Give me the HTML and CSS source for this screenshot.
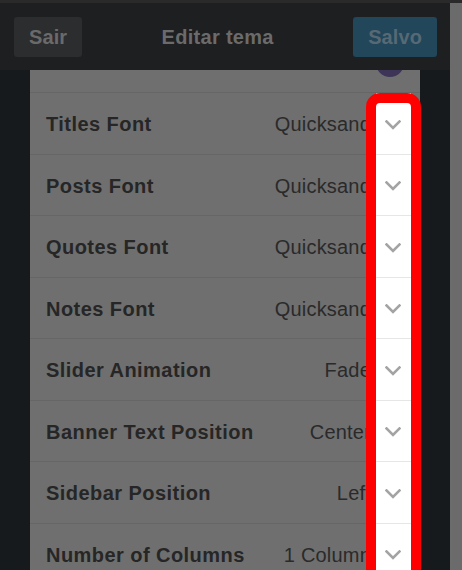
FILE: index.html
```html
<!DOCTYPE html>
<html>
<head>
<meta charset="utf-8">
<link rel="stylesheet" href="styles.css">
</head>
<body>
<div class="topline"></div>
<div class="frame">
  <div class="main">
    <header class="header">
      <button class="btn btn-exit">Sair</button>
      <div class="title">Editar tema</div>
      <button class="btn btn-save">Salvo</button>
    </header>
    <div class="content">
      <div class="panel">
        <div class="row-partial"><div class="swatch"></div></div>
        <div class="row"><div class="row-main"><span class="label">Titles Font</span><span class="value">Quicksand</span></div><div class="chev"><svg width="16" height="10" viewBox="0 0 16 10"><polyline points="1.5,1.5 8,8 14.5,1.5"/></svg></div></div>
        <div class="row"><div class="row-main"><span class="label">Posts Font</span><span class="value">Quicksand</span></div><div class="chev"><svg width="16" height="10" viewBox="0 0 16 10"><polyline points="1.5,1.5 8,8 14.5,1.5"/></svg></div></div>
        <div class="row"><div class="row-main"><span class="label">Quotes Font</span><span class="value">Quicksand</span></div><div class="chev"><svg width="16" height="10" viewBox="0 0 16 10"><polyline points="1.5,1.5 8,8 14.5,1.5"/></svg></div></div>
        <div class="row"><div class="row-main"><span class="label">Notes Font</span><span class="value">Quicksand</span></div><div class="chev"><svg width="16" height="10" viewBox="0 0 16 10"><polyline points="1.5,1.5 8,8 14.5,1.5"/></svg></div></div>
        <div class="row"><div class="row-main"><span class="label">Slider Animation</span><span class="value">Fade</span></div><div class="chev"><svg width="16" height="10" viewBox="0 0 16 10"><polyline points="1.5,1.5 8,8 14.5,1.5"/></svg></div></div>
        <div class="row"><div class="row-main"><span class="label">Banner Text Position</span><span class="value">Center</span></div><div class="chev"><svg width="16" height="10" viewBox="0 0 16 10"><polyline points="1.5,1.5 8,8 14.5,1.5"/></svg></div></div>
        <div class="row"><div class="row-main"><span class="label">Sidebar Position</span><span class="value">Left</span></div><div class="chev"><svg width="16" height="10" viewBox="0 0 16 10"><polyline points="1.5,1.5 8,8 14.5,1.5"/></svg></div></div>
        <div class="row"><div class="row-main"><span class="label">Number of Columns</span><span class="value">1 Column</span></div><div class="chev"><svg width="16" height="10" viewBox="0 0 16 10"><polyline points="1.5,1.5 8,8 14.5,1.5"/></svg></div></div>
      </div>
      <div class="highlight"></div>
    </div>
  </div>
  <div class="scroll"></div>
</div>
</body>
</html>
```
FILE: styles.css
```css
* { box-sizing: border-box; }
html, body { margin: 0; padding: 0; }
body {
  width: 462px;
  height: 570px;
  overflow: hidden;
  background: #171a1d;
  font-family: "Liberation Sans", Arial, sans-serif;
}
.topline { height: 3px; background: #2a2a2b; }
.frame { display: flex; height: 567px; }
.main { width: 450px; display: flex; flex-direction: column; }
.scroll { width: 12px; background: #6b6b6b; }
.header {
  height: 67px;
  background: #1e1f21;
  display: flex;
  align-items: center;
  padding: 1px 13px 0 14px;
}
.btn {
  height: 40px;
  padding: 0 15px;
  border: 0;
  border-radius: 3px;
  font-family: "Liberation Sans", Arial, sans-serif;
  font-weight: bold;
  font-size: 20px;
  letter-spacing: 0.1px;
}
.btn-exit { background: #2c2d2f; color: #6a6a6a; }
.btn-save { background: #22465a; color: #566975; }
.title {
  flex: 1;
  text-align: center;
  font-weight: bold;
  font-size: 20px;
  letter-spacing: 0.3px;
  color: #6b6b6b;
}
.content {
  flex: 1;
  position: relative;
  overflow: hidden;
  padding: 0 30px;
}
.panel { background: #6f6f6f; width: 390px; }
.row-partial {
  height: 23px;
  overflow: hidden;
  border-bottom: 1px solid #666666;
  display: flex;
  justify-content: flex-end;
  padding-right: 16px;
}
.swatch {
  width: 28px;
  height: 28px;
  border-radius: 50%;
  background: #3d3457;
  margin-top: -21px;
}
.row {
  display: flex;
  height: 61.5px;
  padding-right: 9px;
}
.row-main {
  flex: 1;
  display: flex;
  align-items: center;
  padding: 3px 0 0 16px;
  border-bottom: 1px solid #666666;
}
.label {
  flex: 1;
  font-weight: bold;
  font-size: 20px;
  letter-spacing: 0.45px;
  color: #262626;
}
.value {
  font-size: 20px;
  letter-spacing: 0.2px;
  color: #2a2a2a;
  margin-right: 5px;
}
.chev {
  width: 35px;
  background: #ffffff;
  border-bottom: 1px solid #e6e6e6;
  display: flex;
  align-items: center;
  justify-content: center;
  padding: 3px 2px 0 0;
}
.chev svg { display: block; }
.chev polyline {
  fill: none;
  stroke: #a3a3a3;
  stroke-width: 2.6;
  stroke-linecap: square;
}
.highlight {
  position: absolute;
  left: 366px;
  top: 23px;
  width: 55px;
  height: 600px;
  border: 10px solid #ff0000;
  border-radius: 14px 14px 0 0;
}
```
